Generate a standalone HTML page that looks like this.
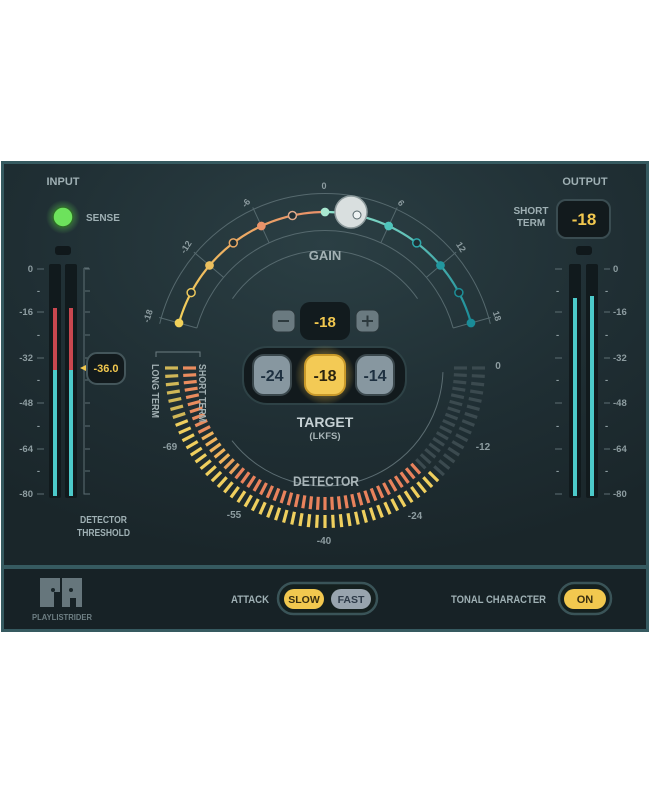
<!DOCTYPE html>
<html><head><meta charset="utf-8">
<style>
html,body{margin:0;padding:0;background:#fff;width:650px;height:794px;overflow:hidden}
svg{display:block}
text{font-family:"Liberation Sans",sans-serif;font-weight:bold}
</style></head><body>
<svg id="s" width="650" height="794" viewBox="0 0 650 794" xmlns="http://www.w3.org/2000/svg">
<defs>
<radialGradient id="bg" cx="0.5" cy="0.2" r="0.8">
<stop offset="0" stop-color="#2b3f44"/><stop offset="0.6" stop-color="#1f2e33"/><stop offset="1" stop-color="#1a262a"/>
</radialGradient>
<radialGradient id="glowY" cx="0.5" cy="0.5" r="0.5">
<stop offset="0.5" stop-color="#f2c84f" stop-opacity="0.5"/><stop offset="1" stop-color="#f2c84f" stop-opacity="0"/>
</radialGradient>
<radialGradient id="glowG" cx="0.5" cy="0.5" r="0.5">
<stop offset="0.45" stop-color="#5fd04f" stop-opacity="0.45"/><stop offset="1" stop-color="#5fd04f" stop-opacity="0"/>
</radialGradient>
<linearGradient id="gl" x1="0" y1="1" x2="1" y2="0"><stop offset="0" stop-color="#f2d15a"/><stop offset="1" stop-color="#e9906a"/></linearGradient>
<linearGradient id="gr" x1="0" y1="0" x2="1" y2="1"><stop offset="0" stop-color="#8fe3cc"/><stop offset="1" stop-color="#1a8c98"/></linearGradient>
</defs>
<rect x="1" y="161" width="648" height="471" fill="#365a60"/>
<rect x="4" y="164" width="642" height="401" fill="url(#bg)"/>
<rect x="4" y="569" width="642" height="60" fill="#172226"/>

<g fill="none" stroke="#56696e" stroke-width="1">
<path id="outerArc"/><path id="innerArc"/><path id="inner2"/>
</g>
<g id="gainTicks" stroke="#56696e" stroke-width="1"></g>
<path id="curveL" fill="none" stroke="url(#gl)" stroke-width="2.2"/>
<path id="curveR" fill="none" stroke="url(#gr)" stroke-width="2.2"/>
<g id="markers"></g>
<circle cx="351" cy="212" r="16" fill="#d9dfdf" stroke="#8d9a9c" stroke-width="1.5"/>
<circle cx="357" cy="215" r="4" fill="#eef3f3" stroke="#55666a" stroke-width="1"/>
<g fill="#8d9ca0" font-size="9" text-anchor="middle">
<text x="324" y="189">0</text>
<text x="246" y="206" transform="rotate(-50 246 203)">-6</text>
<text x="401" y="206" transform="rotate(50 401 203)">6</text>
<text x="186" y="250" transform="rotate(-58 186 247)">-12</text>
<text x="461" y="250" transform="rotate(58 461 247)">12</text>
<text x="148" y="319" transform="rotate(-72 148 316)">-18</text>
<text x="497" y="319" transform="rotate(72 497 316)">18</text>
</g>
<text x="325" y="260" fill="#a3b1b4" font-size="13" text-anchor="middle">GAIN</text>

<rect x="272" y="310" width="23" height="22" rx="6" fill="#6a7a80" stroke="#2a373b"/>
<rect x="278" y="320" width="11" height="2" fill="#2d3a3e"/>
<rect x="356" y="310" width="23" height="22" rx="6" fill="#6a7a80" stroke="#2a373b"/>
<rect x="362" y="320" width="11" height="2" fill="#2d3a3e"/><rect x="366.5" y="315.5" width="2" height="11" fill="#2d3a3e"/>
<rect x="300" y="302" width="50" height="38" rx="10" fill="#121b1e"/>
<text x="325" y="327" fill="#f2c84f" font-size="15" text-anchor="middle">-18</text>

<g id="dashes" stroke-linecap="butt"></g>
<path id="detArc" fill="none" stroke="#5c6d72" stroke-width="1"/>
<text x="293" y="486" fill="#a9b5b8" font-size="14" textLength="66" lengthAdjust="spacingAndGlyphs">DETECTOR</text>
<g fill="#8d9ca0" font-size="10" text-anchor="middle">
<text x="498" y="369">0</text><text x="483" y="450">-12</text><text x="415" y="519">-24</text>
<text x="324" y="544">-40</text><text x="234" y="518">-55</text><text x="170" y="450">-69</text>
</g>
<path d="M156 357 V352 H200 V357" fill="none" stroke="#6c7d82" stroke-width="1"/>
<text x="0" y="0" fill="#a3b1b4" font-size="10" textLength="54" lengthAdjust="spacingAndGlyphs" transform="translate(152,364) rotate(90)">LONG TERM</text>
<text x="0" y="0" fill="#a3b1b4" font-size="10" textLength="58" lengthAdjust="spacingAndGlyphs" transform="translate(199,364) rotate(90)">SHORT TERM</text>

<rect x="243" y="347" width="163" height="57" rx="24" fill="#121a1d" stroke="#2e4246" stroke-width="2"/>
<rect x="253" y="355" width="38" height="40" rx="11" fill="#8797a0" stroke="#3a474c" stroke-width="2"/>
<text x="272" y="381" fill="#1e3040" font-size="16" text-anchor="middle">-24</text>
<circle cx="325" cy="375" r="30" fill="url(#glowY)"/>
<rect x="305" y="355" width="40" height="40" rx="11" fill="#f3ca55" stroke="#c99a2a" stroke-width="2"/>
<text x="325" y="381" fill="#2a2410" font-size="16" text-anchor="middle">-18</text>
<rect x="356" y="355" width="38" height="40" rx="11" fill="#8797a0" stroke="#3a474c" stroke-width="2"/>
<text x="375" y="381" fill="#1e3040" font-size="16" text-anchor="middle">-14</text>
<text x="325" y="427" fill="#c5d0d3" font-size="14" text-anchor="middle">TARGET</text>
<text x="325" y="439" fill="#a8b4b7" font-size="9.5" text-anchor="middle">(LKFS)</text>

<text x="63" y="185" fill="#9fb0b4" font-size="11" text-anchor="middle">INPUT</text>
<circle cx="63" cy="217" r="17" fill="url(#glowG)"/>
<circle cx="63" cy="217" r="10" fill="#6de25c" stroke="#2f6a2a" stroke-width="1.5"/>
<text x="86" y="221" fill="#9fb0b4" font-size="10">SENSE</text>
<rect x="55" y="246" width="16" height="9" rx="3" fill="#10181b"/>
<rect x="49" y="264" width="12" height="234" rx="2" fill="#111a1d"/>
<rect x="65" y="264" width="12" height="234" rx="2" fill="#111a1d"/>
<rect x="53" y="308" width="4" height="62" fill="#c9474f"/><rect x="53" y="370" width="4" height="126" fill="#4ccaca"/>
<rect x="69" y="308" width="4" height="62" fill="#c9474f"/><rect x="69" y="370" width="4" height="126" fill="#4ccaca"/>
<g id="scaleL" fill="#8d9ca0" font-size="9.5" text-anchor="end"></g>
<path d="M84 268 H89 M84 268 V494 H89" fill="none" stroke="#5d6e73"/>
<g id="ticksL" stroke="#5d6e73"></g>
<polygon points="80,368 86,365 86,371" fill="#f2c84f"/>
<rect x="87" y="353" width="38" height="31" rx="10" fill="#121a1d" stroke="#44565b" stroke-width="2"/>
<text x="106" y="372" fill="#f2c84f" font-size="11" text-anchor="middle">-36.0</text>
<text x="80" y="523" fill="#9fb0b4" font-size="10" textLength="47" lengthAdjust="spacingAndGlyphs">DETECTOR</text>
<text x="77" y="536" fill="#9fb0b4" font-size="10" textLength="53" lengthAdjust="spacingAndGlyphs">THRESHOLD</text>

<text x="585" y="185" fill="#9fb0b4" font-size="11" text-anchor="middle">OUTPUT</text>
<text x="531" y="214" fill="#9fb0b4" font-size="10" text-anchor="middle">SHORT</text>
<text x="531" y="226" fill="#9fb0b4" font-size="10" text-anchor="middle">TERM</text>
<rect x="557" y="200" width="53" height="38" rx="9" fill="#121a1d" stroke="#3a4c51" stroke-width="2"/>
<text x="584" y="225" fill="#f2c84f" font-size="17" text-anchor="middle">-18</text>
<rect x="576" y="246" width="16" height="9" rx="3" fill="#10181b"/>
<rect x="569" y="264" width="12" height="234" rx="2" fill="#111a1d"/>
<rect x="586" y="264" width="12" height="234" rx="2" fill="#111a1d"/>
<rect x="573" y="298" width="4" height="198" fill="#4ccaca"/>
<rect x="590" y="296" width="4" height="200" fill="#4ccaca"/>
<g id="scaleR" fill="#8d9ca0" font-size="9.5"></g>

<g fill="#66767c">
<path d="M40 578 h20 v14 h-6 v15 h-14 z"/>
<path d="M62 578 h20 v29 h-6 v-9 h-6 v9 h-8 z"/>
</g>
<circle cx="53" cy="590" r="2" fill="#1a262a"/><circle cx="71" cy="590" r="2" fill="#1a262a"/>
<text x="32" y="620" fill="#6e7f84" font-size="8" textLength="60" lengthAdjust="spacingAndGlyphs">PLAYLISTRIDER</text>
<text x="231" y="603" fill="#9fb0b4" font-size="11" textLength="38" lengthAdjust="spacingAndGlyphs">ATTACK</text>
<rect x="278" y="583" width="99" height="31" rx="15.5" fill="#15201f" stroke="#3a5458" stroke-width="2.5"/>
<rect x="284" y="589" width="40" height="20" rx="10" fill="#f2c84f"/>
<text x="304" y="603" fill="#3a2f10" font-size="10.5" text-anchor="middle">SLOW</text>
<rect x="331" y="589" width="40" height="20" rx="10" fill="#98a4ae"/>
<text x="351" y="603" fill="#2d3a48" font-size="10.5" text-anchor="middle">FAST</text>
<text x="451" y="603" fill="#9fb0b4" font-size="11" textLength="95" lengthAdjust="spacingAndGlyphs">TONAL CHARACTER</text>
<rect x="559" y="583" width="52" height="31" rx="15.5" fill="#15201f" stroke="#3a5458" stroke-width="2.5"/>
<rect x="564" y="589" width="42" height="20" rx="10" fill="#f2c84f"/>
<text x="585" y="603" fill="#3a2f10" font-size="11" text-anchor="middle">ON</text>
</svg>
<script>
(function(){
var NS="http://www.w3.org/2000/svg";
function el(p,t,a){var e=document.createElementNS(NS,t);for(var k in a)e.setAttribute(k,a[k]);p.appendChild(e);return e;}
function $(i){return document.getElementById(i);}
var cx=325,cy=363.5,R=151.5,A=74.5;
function pt(r,deg){var a=deg*Math.PI/180;return [cx+r*Math.sin(a),cy-r*Math.cos(a)];}
function arc(r,a0,a1){var p=pt(r,a0),q=pt(r,a1);return "M"+p[0]+" "+p[1]+" A"+r+" "+r+" 0 0 1 "+q[0]+" "+q[1];}
$("outerArc").setAttribute("d",arc(170,-A-2,A+2));
$("innerArc").setAttribute("d",arc(133,-A,A));
$("inner2").setAttribute("d",arc(113,-55,55));
var gt=$("gainTicks");
[-18,-12,-6,6,12,18].forEach(function(v){var d=v/18*A;var p=pt(133,d),q=pt(172,d);el(gt,"line",{x1:p[0],y1:p[1],x2:q[0],y2:q[1]});});
var dl="",dr="";
for(var i=0;i<=36;i++){var v=-18+i*0.5;var p=pt(R,v/18*A);dl+=(i?"L":"M")+p[0]+" "+p[1];}
for(var i=0;i<=36;i++){var v=i*0.5;var p=pt(R,v/18*A);dr+=(i?"L":"M")+p[0]+" "+p[1];}
$("curveL").setAttribute("d",dl);$("curveR").setAttribute("d",dr);
var lc=["#f2d15a","#eec95c","#ecc05e","#eaa864","#e9936a","#dfa98a","#a8e8d0"];
var rc=["#a8e8d0","#6fd8c0","#4fc4bb","#2ea8ab","#22979f","#1d8f98","#1a8c98"];
var m=$("markers");
for(var k=0;k<7;k++){var v=-18+k*3;var p=pt(R,v/18*A);var f=(k%2==0);el(m,"circle",{cx:p[0],cy:p[1],r:f?3.6:4,fill:f?lc[k]:"#1f2e33",stroke:lc[k],"stroke-width":1.5});}
for(var k=1;k<7;k++){var v=k*3;var p=pt(R,v/18*A);var f=(k%2==0);el(m,"circle",{cx:p[0],cy:p[1],r:f?3.6:4,fill:f?rc[k]:"#1f2e33",stroke:rc[k],"stroke-width":1.5});}
var dx=325,dy=368,g=$("dashes");
function dp(r,deg){var a=deg*Math.PI/180;return [dx-r*Math.sin(a),dy+r*Math.cos(a)];}
var n=60;
for(var i=0;i<=n;i++){var deg=90-i*3;
 var p=dp(147,deg),q=dp(160,deg);
 var litL=deg>-47;
 el(g,"line",{x1:p[0],y1:p[1],x2:q[0],y2:q[1],stroke:litL?"#efcf5e":"#3b4a4f","stroke-width":3.2,opacity:litL&&deg>70?0.85:1});
 var p2=dp(129,deg),q2=dp(142,deg);
 var litS=deg>-43;
 var c=litS?(deg>60?"#ea8c5e":(deg>40?"#e9a25c":"#e9825c")):"#3b4a4f";
 if(litS&&deg>45&&deg<=60)c="#efb35c";
 el(g,"line",{x1:p2[0],y1:p2[1],x2:q2[0],y2:q2[1],stroke:c,"stroke-width":3.2});
}
var a0=dp(118,52),a1=dp(118,-88);
$("detArc").setAttribute("d","M"+a0[0]+" "+a0[1]+" A118 118 0 0 0 "+a1[0]+" "+a1[1]);
var ys=[269,291,312,335,358,380,403,426,449,471,494],lab=["0","-","-16","-","-32","-","-48","-","-64","-","-80"];
var sl=$("scaleL"),tl=$("ticksL"),sr=$("scaleR");
ys.forEach(function(y,i){
 var t=el(sl,"text",{x:lab[i]=="-"?40:33,y:y+3});t.textContent=lab[i];
 if(lab[i]!="-")el(tl,"line",{x1:37,y1:y,x2:44,y2:y});
 el(tl,"line",{x1:85,y1:y,x2:90,y2:y});
 var t2=el(sr,"text",{x:lab[i]=="-"?605:613,y:y+3});t2.textContent=lab[i];
 if(lab[i]!="-"){el(tl,"line",{x1:604,y1:y,x2:610,y2:y});el(tl,"line",{x1:555,y1:y,x2:562,y2:y});}
 else{var t3=el(sr,"text",{x:556,y:y+3});t3.textContent="-";}
});
})();
</script>
</body></html>
